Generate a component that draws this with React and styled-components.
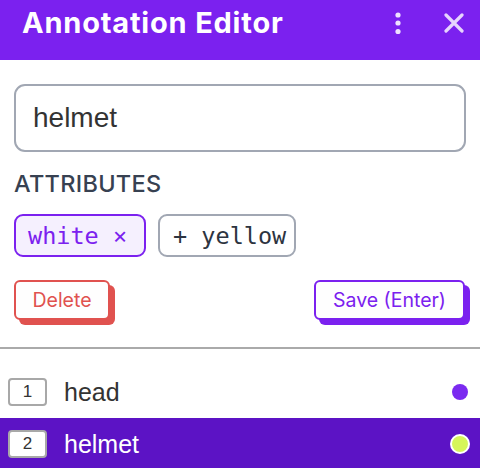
import React from 'react';
import styled, { createGlobalStyle } from 'styled-components';

const GlobalStyle = createGlobalStyle`
    body {
        margin: 0;
        background: #ffffff;
        font-family: Inter, "Noto Sans", sans-serif;
    }
`;

const items = [
    { id: 1, label: 'head', color: '#7B2AF0', active: false },
    { id: 2, label: 'helmet', color: '#D6F55A', active: true },
];

const App = () => {
    return (
        <>
        <GlobalStyle />
        <Panel>
            <Header>
                <Title>Annotation Editor</Title>
                <HeaderIcons>
                    <IconButton aria-label="more">
                        <svg width="10" height="24" viewBox="0 0 10 24">
                            <circle cx="5" cy="4" r="2.6" fill="#EEE2FF" />
                            <circle cx="5" cy="12" r="2.6" fill="#EEE2FF" />
                            <circle cx="5" cy="20.5" r="2.6" fill="#EEE2FF" />
                        </svg>
                    </IconButton>
                    <IconButton aria-label="close">
                        <svg width="20" height="20" viewBox="0 0 20 20">
                            <path d="M2 2 L18 18 M18 2 L2 18" stroke="#E6D4FD" strokeWidth="3.2" strokeLinecap="round" />
                        </svg>
                    </IconButton>
                </HeaderIcons>
            </Header>
            <Body>
                <NameInput defaultValue="helmet" />
                <SectionLabel>ATTRIBUTES</SectionLabel>
                <ChipRow>
                    <Chip $selected>white ×</Chip>
                    <Chip>+ yellow</Chip>
                </ChipRow>
                <ActionRow>
                    <ActionBtn $color="#E0524F" $width={96}>Delete</ActionBtn>
                    <ActionBtn $color="#7B21EF" $width={151}>Save (Enter)</ActionBtn>
                </ActionRow>
            </Body>
            <Divider />
            <List>
                {items.map((it) => (
                    <Row key={it.id} $active={it.active}>
                        <Badge>{it.id}</Badge>
                        <RowLabel $active={it.active}>{it.label}</RowLabel>
                        <Dot $color={it.color} $active={it.active} />
                    </Row>
                ))}
            </List>
        </Panel>
        </>
    );
};

export default App;

const Panel = styled.div`
    width: 480px;
    height: 468px;
    overflow: hidden;
    display: flex;
    flex-direction: column;
`

const Header = styled.div`
    height: 60px;
    flex-shrink: 0;
    box-sizing: border-box;
    background-color: #7B21EF;
    display: flex;
    justify-content: space-between;
    align-items: center;
    padding: 0 16px 14px 22px;
`
const Title = styled.span`
    color: white;
    font-family: Inter, sans-serif;
    font-weight: 700;
    font-size: 29px;
    line-height: 28px;
    letter-spacing: 0.8px;
`
const HeaderIcons = styled.div`
    display: flex;
    align-items: center;
    gap: 41px;
`
const IconButton = styled.span`
    display: flex;
    align-items: center;
`

const Body = styled.div`
    padding: 24px 14px 0;
    display: flex;
    flex-direction: column;
`
const NameInput = styled.input`
    box-sizing: border-box;
    width: 452px;
    height: 68px;
    border: 2px solid #A1A7B3;
    border-radius: 11px;
    padding: 0 17px;
    font-family: "Liberation Sans", Arial, sans-serif;
    font-size: 28px;
    color: #333333;
    outline: none;
`
const SectionLabel = styled.div`
    margin-top: 18px;
    font-family: Inter, sans-serif;
    font-weight: 500;
    font-size: 23.5px;
    line-height: 27px;
    letter-spacing: 0.3px;
    color: #374151;
`
const ChipRow = styled.div`
    display: flex;
    gap: 12px;
    margin-top: 17px;
`
const Chip = styled.span`
    box-sizing: border-box;
    height: 43px;
    display: flex;
    align-items: center;
    padding: ${p => p.$selected ? '0 17px 0 12px' : '0 8px 0 13px'};
    border: 2px solid ${p => p.$selected ? '#7B21EF' : '#A1A7B3'};
    background: ${p => p.$selected ? '#F5F0FE' : '#ffffff'};
    color: ${p => p.$selected ? '#7B21EF' : '#2D3440'};
    border-radius: 9px;
    font-family: "DejaVu Sans Mono", "Liberation Mono", monospace;
    font-size: 23.5px;
`
const ActionRow = styled.div`
    display: flex;
    justify-content: space-between;
    margin-top: 23px;
    padding-right: 1px;
`
const ActionBtn = styled.button`
    box-sizing: border-box;
    width: ${p => p.$width}px;
    height: 40px;
    border: 2px solid ${p => p.$color};
    color: ${p => p.$color};
    background: #FEFEFE;
    border-radius: 6px;
    box-shadow: 5px 5px 0 ${p => p.$color};
    font-family: Inter, sans-serif;
    font-size: 19.5px;
    padding: 0;
`

const Divider = styled.div`
    margin-top: 27px;
    height: 2px;
    flex-shrink: 0;
    background: #AAAAAA;
`

const List = styled.div`
    padding-top: 17px;
    display: flex;
    flex-direction: column;
`
const Row = styled.div`
    height: 52px;
    flex-shrink: 0;
    display: flex;
    align-items: center;
    padding: 0 10px 0 8px;
    background: ${p => p.$active ? '#5C13C5' : 'transparent'};
`
const Badge = styled.span`
    box-sizing: border-box;
    width: 39px;
    height: 28px;
    border: 2px solid #A8A8A8;
    border-radius: 4px;
    background: white;
    display: flex;
    align-items: center;
    justify-content: center;
    font-family: "Liberation Sans", Arial, sans-serif;
    font-size: 17px;
    color: #333333;
`
const RowLabel = styled.span`
    margin-left: 17px;
    flex: 1;
    font-family: "Liberation Sans", Arial, sans-serif;
    font-size: 25px;
    color: ${p => p.$active ? '#ffffff' : '#333333'};
`
const Dot = styled.span`
    box-sizing: border-box;
    width: ${p => p.$active ? 20 : 16}px;
    height: ${p => p.$active ? 20 : 16}px;
    margin-right: ${p => p.$active ? 0 : 2}px;
    border-radius: 50%;
    background: ${p => p.$color};
    border: ${p => p.$active ? '2px solid #ffffff' : 'none'};
`
